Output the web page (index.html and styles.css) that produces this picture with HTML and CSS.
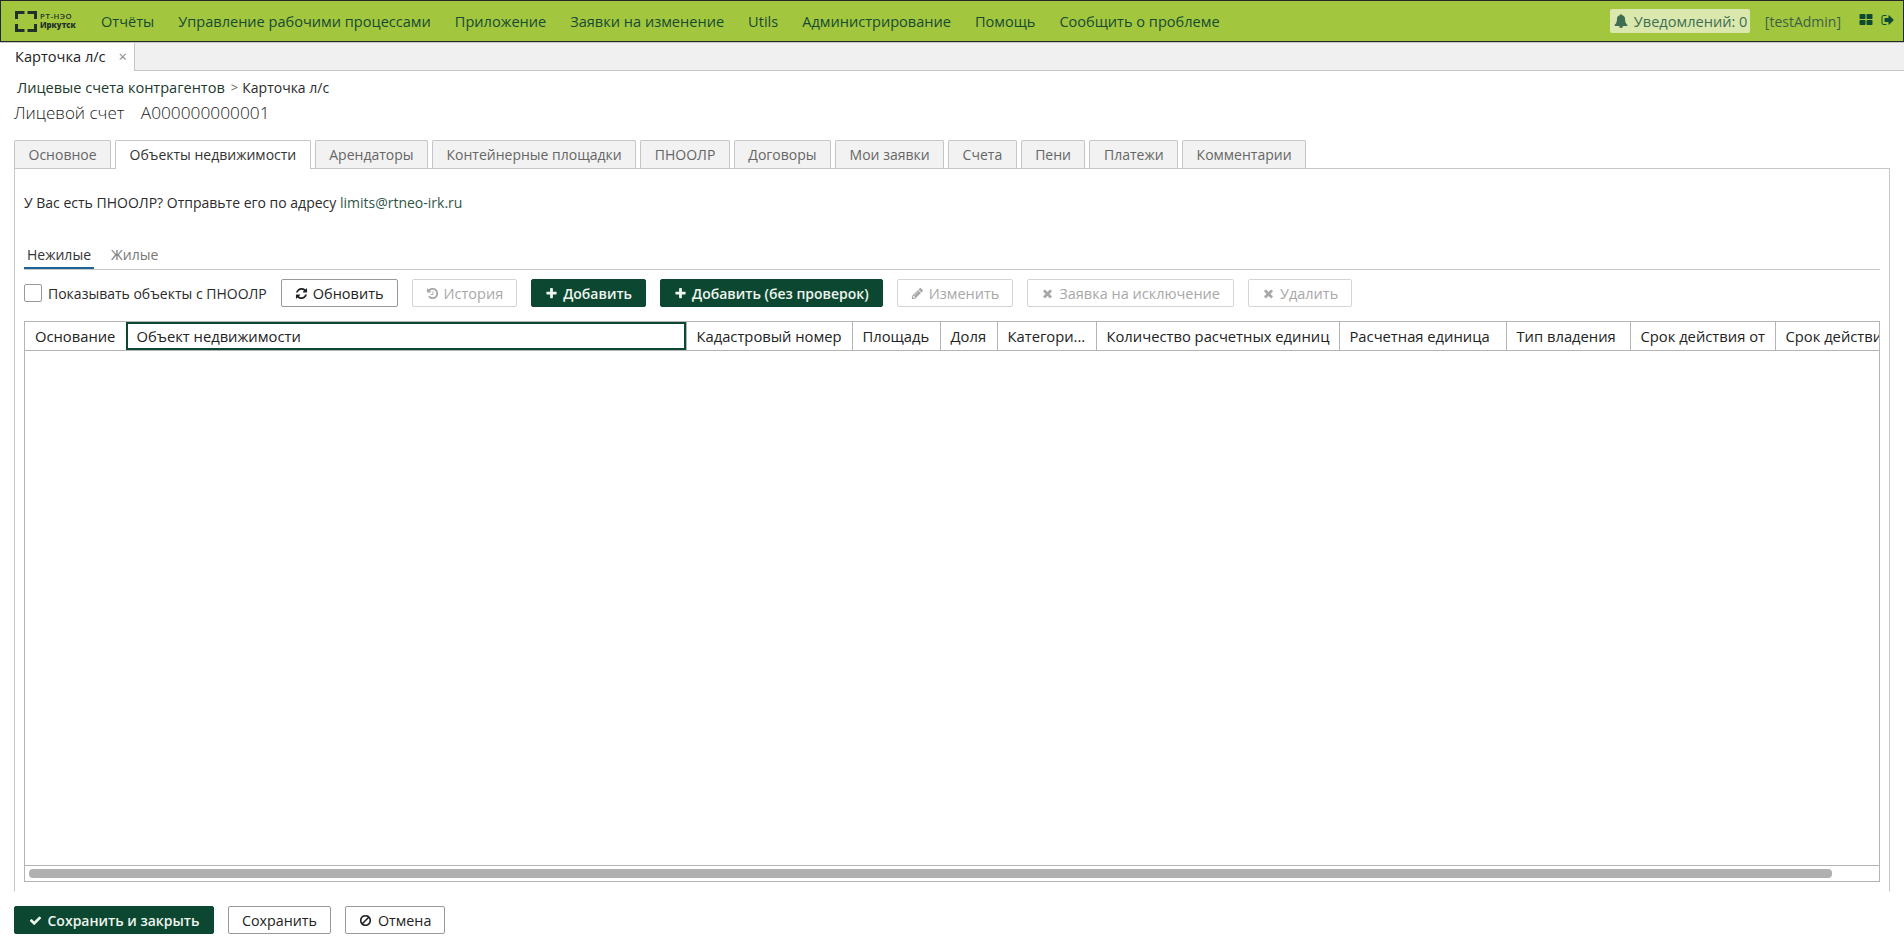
FILE: index.html
```html
<!DOCTYPE html>
<html lang="en">

    <head>
        <meta charset="UTF-8">
        <meta name="viewport" content="width=device-width, initial-scale=1.0">
        <title>Карточка л/с</title>

        <link rel="stylesheet" href="styles.css">
    </head>

    <body>
        <svg class="sprite" xmlns="http://www.w3.org/2000/svg">
            <symbol id="i-plus" viewBox="0 0 1792 1792"><path d="M1600 736v192q0 40-28 68t-68 28h-416v416q0 40-28 68t-68 28h-192q-40 0-68-28t-28-68v-416h-416q-40 0-68-28t-28-68v-192q0-40 28-68t68-28h416v-416q0-40 28-68t68-28h192q40 0 68 28t28 68v416h416q40 0 68 28t28 68z"/></symbol>
            <symbol id="i-times" viewBox="0 0 1792 1792"><path d="M1490 1322q0 40-28 68l-136 136q-28 28-68 28t-68-28l-294-294-294 294q-28 28-68 28t-68-28l-136-136q-28-28-28-68t28-68l294-294-294-294q-28-28-28-68t28-68l136-136q28-28 68-28t68 28l294 294 294-294q28-28 68-28t68 28l136 136q28 28 28 68t-28 68l-294 294 294 294q28 28 28 68z"/></symbol>
            <symbol id="i-check" viewBox="0 0 1792 1792"><path d="M1671 566q0 40-28 68l-724 724-136 136q-28 28-68 28t-68-28l-136-136-362-362q-28-28-28-68t28-68l136-136q28-28 68-28t68 28l294 295 656-657q28-28 68-28t68 28l136 136q28 28 28 68z"/></symbol>
            <symbol id="i-refresh" viewBox="0 0 1792 1792"><path d="M1639 1056q0 5-1 7-64 268-268 434.5t-478 166.5q-146 0-282.5-55t-243.5-157l-129 129q-19 19-45 19t-45-19-19-45v-448q0-26 19-45t45-19h448q26 0 45 19t19 45-19 45l-137 137q71 66 161 102t187 36q134 0 250-65t186-179q11-17 53-117 8-23 30-23h192q13 0 22.5 9.5t9.5 22.5zm25-800v448q0 26-19 45t-45 19h-448q-26 0-45-19t-19-45 19-45l138-138q-148-137-349-137-134 0-250 65t-186 179q-11 17-53 117-8 23-30 23h-199q-13 0-22.5-9.5t-9.5-22.5v-7q65-268 270-434.5t480-166.5q146 0 284 55.5t245 156.5l130-129q19-19 45-19t45 19 19 45z"/></symbol>
            <symbol id="i-bell" viewBox="0 0 1792 1792"><path d="M912 1696q0-16-16-16-59 0-101.5-42.5t-42.5-101.5q0-16-16-16t-16 16q0 73 51.5 124.5t124.5 51.5q16 0 16-16zm816-288q0 52-38 90t-90 38h-448q0 106-75 181t-181 75-181-75-75-181h-448q-52 0-90-38t-38-90q50-42 91-88t85-119.5 74.5-158.5 50-206 19.5-260q0-152 117-282.5t307-158.5q-8-19-8-39 0-40 28-68t68-28 68 28 28 68q0 20-8 39 190 28 307 158.5t117 282.5q0 139 19.5 260t50 206 74.5 158.5 85 119.5 91 88z"/></symbol>
            <symbol id="i-grid" viewBox="0 0 1792 1792"><path d="M832 1024v384q0 52-38 90t-90 38h-512q-52 0-90-38t-38-90v-384q0-52 38-90t90-38h512q52 0 90 38t38 90zm0-768v384q0 52-38 90t-90 38h-512q-52 0-90-38t-38-90v-384q0-52 38-90t90-38h512q52 0 90 38t38 90zm896 768v384q0 52-38 90t-90 38h-512q-52 0-90-38t-38-90v-384q0-52 38-90t90-38h512q52 0 90 38t38 90zm0-768v384q0 52-38 90t-90 38h-512q-52 0-90-38t-38-90v-384q0-52 38-90t90-38h512q52 0 90 38t38 90z"/></symbol>
            <symbol id="i-exit" viewBox="0 0 1792 1792"><path d="M704 1440q0 4 1 20t.5 26.5-3 23.5-10 19.5-20.5 6.5h-320q-119 0-203.5-84.5t-84.5-203.5v-704q0-119 84.5-203.5t203.5-84.5h320q13 0 22.5 9.5t9.5 22.5q0 4 1 20t.5 26.5-3 23.5-10 19.5-20.5 6.5h-320q-66 0-113 47t-47 113v704q0 66 47 113t113 47h312l11.5 1 11.5 3 8 5.5 7 9 2 13.5zm928-544q0 26-19 45l-544 544q-19 19-45 19t-45-19-19-45v-288h-448q-26 0-45-19t-19-45v-384q0-26 19-45t45-19h448v-288q0-26 19-45t45-19 45 19l544 544q19 19 19 45z"/></symbol>
            <symbol id="i-pencil" viewBox="0 0 1792 1792"><path d="M491 1536l91-91-235-235-91 91v107h128v128h107zm523-928q0-22-22-22-10 0-17 7l-542 542q-7 7-7 17 0 22 22 22 10 0 17-7l542-542q7-7 7-17zm-54-192l416 416-832 832h-416v-416zm683 96q0 53-37 90l-166 166-416-416 166-165q36-38 90-38 53 0 91 38l235 234q37 39 37 91z"/></symbol>
            <symbol id="i-ban" viewBox="0 0 1792 1792"><path d="M1440 893q0-161-87-295l-754 753q137 89 297 89 111 0 211.5-43.5t173.5-116.5 116-174.5 43-212.5zm-999 299l755-754q-135-91-300-91-148 0-273 73t-198 199-73 274q0 162 89 299zm1223-299q0 157-61 300t-163.5 246-245 164-298.5 61-298.5-61-245-164-163.5-246-61-300 61-299.5 163.5-245.5 245-164 298.5-61 298.5 61 245 164 163.5 245.5 61 299.5z"/></symbol>
            <symbol id="i-history" viewBox="0 0 1792 1792"><path d="M1664 896q0 156-61 298t-164 245-245 164-298 61q-172 0-327-72.5t-264-204.5q-7-10-6.5-22.5t8.5-20.5l137-138q10-9 25-9 16 2 23 12 73 95 179 147t225 52q104 0 198.5-40.5t163.5-109.5 109.5-163.5 40.5-198.5-40.5-198.5-109.5-163.5-163.5-109.5-198.5-40.5q-98 0-188 35.5t-160 101.5l137 138q31 30 14 69-17 40-59 40h-448q-26 0-45-19t-19-45v-448q0-42 40-59 39-17 69 14l130 129q107-101 244.5-156.5t284.5-55.5q156 0 298 61t245 164 164 245 61 298zm-640-288v448q0 14-9 23t-23 9h-320q-14 0-23-9t-9-23v-64q0-14 9-23t23-9h224v-352q0-14 9-23t23-9h64q14 0 23 9t9 23z"/></symbol>
        </svg>

        <header class="topbar">
            <a class="logo">
                <svg class="logo-mark" viewBox="0 0 22 21" xmlns="http://www.w3.org/2000/svg">
                    <path d="M9.5 1.5H1.5V8M12.5 1.5h8V8M1.5 13v6.5h8M20.5 13v6.5h-8" fill="none" stroke="#23302a" stroke-width="3"/>
                </svg>
                <span class="logo-text">
                    <span class="logo-top">РТ-НЭО</span>
                    <b>Иркутск</b>
                </span>
            </a>
            <nav class="menu">
                <a>Отчёты</a>
                <a>Управление рабочими процессами</a>
                <a>Приложение</a>
                <a>Заявки на изменение</a>
                <a>Utils</a>
                <a>Администрирование</a>
                <a>Помощь</a>
                <a>Сообщить о проблеме</a>
            </nav>
            <div class="top-right">
                <span class="notice"><svg class="ico ico-bell"><use href="#i-bell"/></svg>Уведомлений: 0</span>
                <span class="user">[testAdmin]</span>
                <svg class="ico ico-top"><use href="#i-grid"/></svg>
                <svg class="ico ico-top"><use href="#i-exit"/></svg>
            </div>
        </header>

        <div class="window-tabs">
            <div class="window-tab">Карточка л/с <span class="close">×</span></div>
        </div>

        <main class="content">
            <div class="crumbs"><a>Лицевые счета контрагентов</a><span class="sep">&gt;</span><span>Карточка л/с</span></div>
            <h1 class="title">Лицевой счет <span>А000000000001</span></h1>

            <ul class="tabs">
                <li>Основное</li>
                <li class="active">Объекты недвижимости</li>
                <li>Арендаторы</li>
                <li>Контейнерные площадки</li>
                <li>ПНООЛР</li>
                <li>Договоры</li>
                <li>Мои заявки</li>
                <li>Счета</li>
                <li>Пени</li>
                <li>Платежи</li>
                <li>Комментарии</li>
            </ul>

            <section class="panel">
                <p class="hint">У Вас есть ПНООЛР? Отправьте его по адресу <a>limits@rtneo-irk.ru</a></p>

                <ul class="subtabs">
                    <li class="active">Нежилые</li>
                    <li>Жилые</li>
                </ul>

                <div class="toolbar">
                    <label class="check"><span class="box"></span>Показывать объекты с ПНООЛР</label>
                    <button class="btn"><svg class="ico"><use href="#i-refresh"/></svg>Обновить</button>
                    <button class="btn off"><svg class="ico"><use href="#i-history"/></svg>История</button>
                    <button class="btn dark"><svg class="ico"><use href="#i-plus"/></svg>Добавить</button>
                    <button class="btn dark"><svg class="ico"><use href="#i-plus"/></svg>Добавить (без проверок)</button>
                    <button class="btn off"><svg class="ico"><use href="#i-pencil"/></svg>Изменить</button>
                    <button class="btn off"><svg class="ico"><use href="#i-times"/></svg>Заявка на исключение</button>
                    <button class="btn off"><svg class="ico"><use href="#i-times"/></svg>Удалить</button>
                </div>

                <div class="grid">
                    <div class="grid-body">
                        <table>
                            <thead>
                                <tr>
                                    <th class="c-base">Основание</th>
                                    <th class="c-object focus">Объект недвижимости</th>
                                    <th class="c-cadastre">Кадастровый номер</th>
                                    <th class="c-area">Площадь</th>
                                    <th class="c-share">Доля</th>
                                    <th class="c-cat">Категори...</th>
                                    <th class="c-count">Количество расчетных единиц</th>
                                    <th class="c-unit">Расчетная единица</th>
                                    <th class="c-own">Тип владения</th>
                                    <th class="c-from">Срок действия от</th>
                                    <th class="c-to">Срок действия до</th>
                                </tr>
                            </thead>
                        </table>
                    </div>
                    <div class="grid-scroll"><div class="thumb"></div></div>
                </div>
            </section>

            <footer class="actions">
                <button class="btn dark"><svg class="ico"><use href="#i-check"/></svg>Сохранить и закрыть</button>
                <button class="btn">Сохранить</button>
                <button class="btn"><svg class="ico"><use href="#i-ban"/></svg>Отмена</button>
            </footer>
        </main>
    </body>

</html>
```

FILE: styles.css
```css
html,
body {
    margin: 0;
    height: 100%;
    overflow: hidden;
}

body {
    display: flex;
    flex-direction: column;
    font-family: "Open Sans", sans-serif;
    font-size: 14px;
    color: #2b2b2b;
    background-color: #fff;
}

.sprite {
    display: none;
}

.ico {
    width: 14px;
    height: 14px;
    fill: currentColor;
    flex: none;
}

/* top bar */
.topbar {
    height: 40px;
    flex: none;
    display: flex;
    align-items: center;
    background-color: #a2c73f;
    border: 1px solid #24282a;
    color: #174a33;
    font-size: 14.57px;
}

.logo {
    width: 100px;
    display: flex;
    align-items: center;
    padding-left: 14px;
    box-sizing: border-box;
    color: #23302a;
}

.logo-mark {
    width: 22px;
    height: 21px;
    margin-right: 3px;
    flex: none;
}

.logo-text {
    display: flex;
    flex-direction: column;
    font-size: 7.8px;
    line-height: 9px;
    font-weight: 600;
}

.logo-top {
    letter-spacing: .6px;
}

.menu {
    display: flex;
    gap: 24px;
}

.top-right {
    margin-left: auto;
    display: flex;
    align-items: center;
}

.notice {
    display: flex;
    align-items: center;
    height: 24px;
    width: 140px;
    box-sizing: border-box;
    padding-left: 4px;
    background-color: #dae8ae;
    border-radius: 2px;
    color: #3f6d52;
}

.ico-bell {
    margin-right: 6px;
}

.user {
    margin: 0 18px 0 15px;
    color: #3f5f45;
    font-size: 14px;
}

.ico-top {
    margin-right: 8px;
    color: #0e4a31;
    margin-bottom: 3px;
}

/* window tabs */
.window-tabs {
    height: 27px;
    flex: none;
    display: flex;
    background-color: #f0f0f0;
    border-top: 1px solid #c6c6c6;
    border-bottom: 1px solid #c6c6c6;
}

.window-tab {
    width: 135px;
    margin-bottom: -1px;
    box-sizing: border-box;
    padding-left: 15px;
    background-color: #fff;
    border-right: 1px solid #c6c6c6;
    line-height: 27px;
    font-size: 14.6px;
    color: #222;
}

.close {
    margin-left: 9px;
    color: #888;
}

/* page */
.content {
    flex: 1;
    min-height: 0;
    display: flex;
    flex-direction: column;
    padding: 6px 14px 14px;
}

.crumbs {
    display: flex;
    align-items: center;
    height: 20px;
    padding-left: 3px;
    font-size: 14px;
}

.crumbs a {
    font-weight: 500;
    font-size: 14.55px;
    color: #1b3a2c;
}

.sep {
    margin: 0 4px 0 6px;
    font-size: 13px;
    color: #666;
}

.title {
    margin: 4px 0 15px;
    font-size: 17px;
    line-height: 24px;
    font-weight: 300;
    color: #222;
}

.title span {
    margin-left: 12px;
    font-size: 17.3px;
}

.tabs {
    list-style: none;
    margin: 0;
    padding: 0;
    display: flex;
    gap: 4px;
    height: 28px;
    position: relative;
    z-index: 1;
}

.tabs li {
    height: 28px;
    box-sizing: border-box;
    padding: 0 13.5px;
    background-color: #f2f2f2;
    border: 1px solid #c6c6c6;
    border-bottom: 0;
    border-radius: 2px 2px 0 0;
    line-height: 27px;
    color: #666;
}

.tabs .active {
    background-color: #fff;
    height: 29px;
    color: #333;
}

.panel {
    flex: 1;
    min-height: 0;
    display: flex;
    flex-direction: column;
    border: 1px solid #c6c6c6;
    border-bottom: 0;
    padding: 0 9px 9px;
    margin-bottom: 15px;
}

.hint {
    margin: 24px 0 0;
    height: 20px;
    line-height: 20px;
    font-size: 14px;
}

.hint a {
    color: #2f5548;
}

.subtabs {
    list-style: none;
    margin: 30px 0 0;
    padding: 0;
    display: flex;
    height: 26px;
    border-bottom: 1px solid #c6c6c6;
}

.subtabs li {
    padding: 0 3px;
    margin-right: 14px;
    line-height: 24px;
    color: #777;
}

.subtabs .active {
    height: 24px;
    border-bottom: 2px solid #1d6396;
    color: #333;
}

.toolbar {
    display: flex;
    align-items: center;
    gap: 14px;
    margin-top: 9px;
}

.check {
    display: flex;
    align-items: center;
    gap: 6px;
}

.box {
    width: 16px;
    height: 16px;
    border: 1px solid #999;
    border-radius: 2px;
    background-color: #fff;
}

.btn {
    height: 28px;
    display: inline-flex;
    align-items: center;
    justify-content: center;
    gap: 5px;
    padding: 0 13px;
    background-color: #fff;
    border: 1px solid #999;
    border-radius: 2px;
    font-family: inherit;
    font-size: 14.5px;
    font-weight: 500;
    color: #222;
}

.btn .ico {
    width: 13px;
    height: 13px;
}

.btn.dark {
    background-color: #0c4731;
    border-color: #0c4731;
    color: #eef5ee;
    font-size: 14px;
    font-weight: 600;
}

.btn.off {
    border-color: #d4d4d4;
    color: #a8a8a8;
    font-weight: 400;
    font-size: 14.5px;
}

.actions .btn {
    gap: 6px;
    font-size: 14.3px;
}

.actions .btn.dark {
    padding: 0 13.5px;
    font-size: 14px;
}

/* grid */
.grid {
    flex: 1;
    min-height: 0;
    margin-top: 14px;
    display: flex;
    flex-direction: column;
    border: 1px solid #b4b4b4;
}

.grid-body {
    flex: 1;
    min-height: 0;
    overflow: hidden;
}

.grid table {
    border-collapse: collapse;
    table-layout: fixed;
    width: 1985px;
}

.grid th {
    height: 28px;
    padding: 1px 10px 0;
    box-sizing: border-box;
    border-right: 1px solid #b4b4b4;
    border-bottom: 1px solid #b4b4b4;
    text-align: left;
    font-weight: 500;
    font-size: 14.75px;
    color: #222;
    white-space: nowrap;
    overflow: hidden;
}

.grid .focus {
    outline: 2px solid #0c4731;
    outline-offset: -2px;
}

.c-base { width: 101px; }
.c-object { width: 560px; }
.c-cadastre { width: 166px; }
.c-area { width: 88px; }
.c-share { width: 57px; }
.c-cat { width: 99px; }
.c-count { width: 243px; }
.c-unit { width: 167px; }
.c-own { width: 124px; }
.c-from { width: 145px; }
.c-to { width: 235px; }

.grid-scroll {
    height: 16px;
    flex: none;
    border-top: 1px solid #b4b4b4;
    padding: 3px 4px;
    box-sizing: border-box;
}

.thumb {
    width: 1803px;
    height: 9px;
    background-color: #b0b0b0;
    border-radius: 4px;
}

.actions {
    display: flex;
    gap: 14px;
    flex: none;
}
```
